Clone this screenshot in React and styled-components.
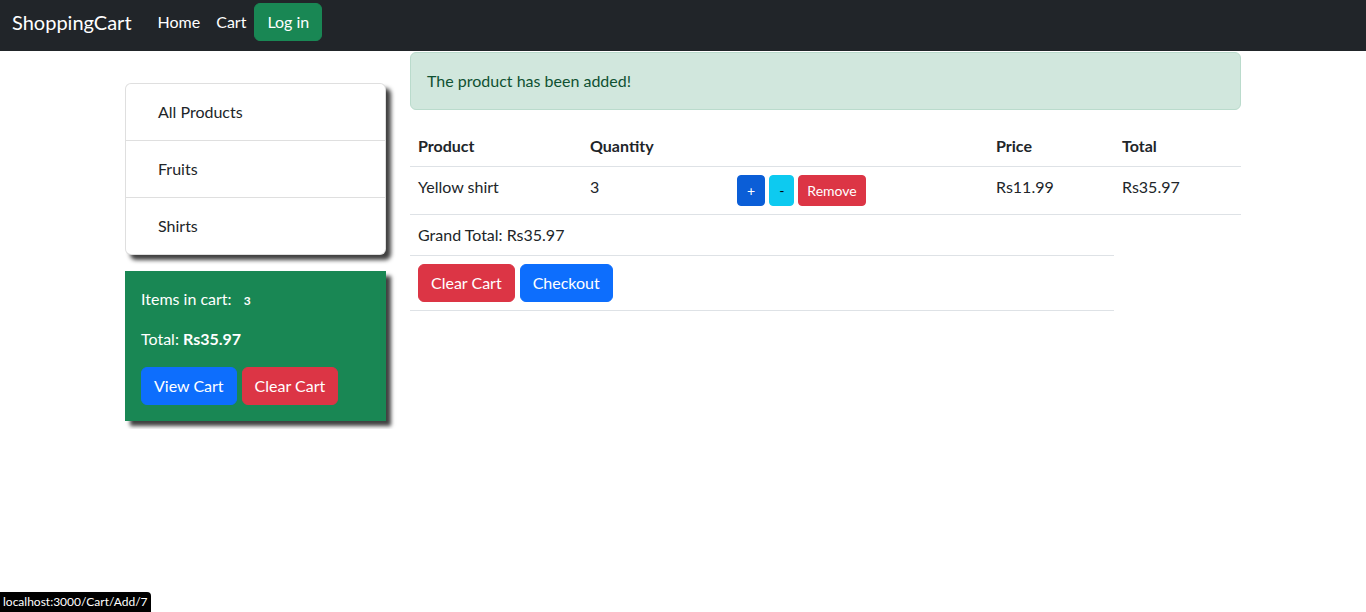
import styled, { createGlobalStyle } from "styled-components";

const GlobalStyle = createGlobalStyle`
    * {
        box-sizing: border-box;
    }
    body {
        margin: 0;
        font-family: Lato, "Liberation Sans", sans-serif;
        font-size: 16px;
        line-height: 1.5;
        color: #212529;
        background: #fff;
    }
`;

const cartRows = [
    { name: "Yellow shirt", qty: 3, price: "Rs11.99", total: "Rs35.97" },
];

export default function App() {
    return (
        <>
            <GlobalStyle />
            <Navbar>
                <Brand>ShoppingCart</Brand>
                <NavLink>Home</NavLink>
                <NavLink>Cart</NavLink>
                <Button $variant="success">Log in</Button>
            </Navbar>

            <Container>
                <Sidebar>
                    <ListGroup>
                        <ListItem>All Products</ListItem>
                        <ListItem>Fruits</ListItem>
                        <ListItem>Shirts</ListItem>
                    </ListGroup>

                    <CartCard>
                        <CardLine>
                            Items in cart: <Badge>3</Badge>
                        </CardLine>
                        <CardLine>
                            Total: <b>Rs35.97</b>
                        </CardLine>
                        <ButtonRow>
                            <Button $variant="primary">View Cart</Button>
                            <Button $variant="danger">Clear Cart</Button>
                        </ButtonRow>
                    </CartCard>
                </Sidebar>

                <Main>
                    <Alert>The product has been added!</Alert>

                    <Table>
                        <colgroup>
                            <col style={{ width: 172 }} />
                            <col style={{ width: 147 }} />
                            <col style={{ width: 259 }} />
                            <col style={{ width: 126 }} />
                            <col style={{ width: 127 }} />
                        </colgroup>
                        <thead>
                            <tr>
                                <Th>Product</Th>
                                <Th>Quantity</Th>
                                <Th></Th>
                                <Th>Price</Th>
                                <Th>Total</Th>
                            </tr>
                        </thead>
                        <tbody>
                            {cartRows.map((row) => (
                                <tr key={row.name}>
                                    <Td>{row.name}</Td>
                                    <Td>{row.qty}</Td>
                                    <Td>
                                        <SmallButtons>
                                            <SmallButton $variant="plus">+</SmallButton>
                                            <SmallButton $variant="info">-</SmallButton>
                                            <SmallButton $variant="danger">Remove</SmallButton>
                                        </SmallButtons>
                                    </Td>
                                    <Td>{row.price}</Td>
                                    <Td>{row.total}</Td>
                                </tr>
                            ))}
                            <tr>
                                <Td>Grand Total: Rs35.97</Td>
                                <Td></Td>
                                <Td></Td>
                                <Td></Td>
                            </tr>
                            <tr>
                                <Td colSpan={4}>
                                    <ButtonRow>
                                        <Button $variant="danger">Clear Cart</Button>
                                        <Button $variant="primary">Checkout</Button>
                                    </ButtonRow>
                                </Td>
                            </tr>
                        </tbody>
                    </Table>
                </Main>
            </Container>

            <StatusBar>localhost:3000/Cart/Add/7</StatusBar>
        </>
    );
}

const colors = {
    primary: "#0d6efd",
    plus: "#0b5ed7",
    success: "#198754",
    danger: "#dc3545",
    info: "#0dcaf0",
};

const Navbar = styled.nav`
    display: flex;
    align-items: center;
    height: 51px;
    padding: 3px 12px 10px;
    background: #212529;
`;

const Brand = styled.span`
    font-size: 20px;
    line-height: 30px;
    color: #fff;
    margin-right: 18px;
`;

const NavLink = styled.span`
    padding: 8px;
    color: #fff;
    line-height: 24px;
`;

const Button = styled.button`
    display: inline-block;
    font-family: inherit;
    font-size: 16px;
    line-height: 24px;
    padding: 6px 12px;
    border: 1px solid ${(p) => colors[p.$variant]};
    border-radius: 6px;
    background: ${(p) => colors[p.$variant]};
    color: #fff;
    cursor: pointer;
`;

const Container = styled.div`
    width: 1140px;
    margin: 0 auto;
    display: grid;
    grid-template-columns: 285px 855px;
    align-items: start;
`;

const Sidebar = styled.aside`
    padding: 32px 12px 8px;
    display: flex;
    flex-direction: column;
    gap: 16px;
`;

const ListGroup = styled.div`
    border: 1px solid rgba(0, 0, 0, 0.125);
    border-radius: 6px;
    background: #fff;
    box-shadow: 5px 5px 4px rgba(0, 0, 0, 0.75);
`;

const ListItem = styled.div`
    padding: 16px 32px;
    & + & {
        border-top: 1px solid rgba(0, 0, 0, 0.125);
    }
`;

const CartCard = styled.div`
    background: #198754;
    color: #fff;
    padding: 16px;
    box-shadow: 5px 5px 4px rgba(0, 0, 0, 0.75);
`;

const CardLine = styled.p`
    margin: 0 0 16px;
`;

const Badge = styled.span`
    display: inline-block;
    font-size: 12px;
    font-weight: 700;
    line-height: 1;
    padding: 4px 8px;
`;

const ButtonRow = styled.div`
    display: flex;
    gap: 5px;
`;

const Main = styled.main`
    padding: 1px 12px 0;
`;

const Alert = styled.div`
    background: #d1e7dd;
    border: 1px solid #badbcc;
    color: #0f5132;
    border-radius: 6px;
    padding: 16px;
    margin-bottom: 16px;
`;

const Table = styled.table`
    width: 831px;
    table-layout: fixed;
    border-collapse: collapse;
`;

const Th = styled.th`
    text-align: left;
    font-weight: 700;
    padding: 8px;
    border-bottom: 1px solid #dee2e6;
`;

const Td = styled.td`
    padding: 8px;
    vertical-align: top;
    border-bottom: 1px solid #dee2e6;
`;

const SmallButtons = styled.div`
    display: flex;
    gap: 4px;
`;

const SmallButton = styled.button`
    font-family: inherit;
    font-size: 14px;
    line-height: 21px;
    padding: 4px ${(p) => (p.$variant === "danger" ? "8px" : "9px")};
    border: 1px solid ${(p) => colors[p.$variant]};
    border-radius: 4px;
    background: ${(p) => colors[p.$variant]};
    color: ${(p) => (p.$variant === "info" ? "#000" : "#fff")};
    cursor: pointer;
`;

const StatusBar = styled.div`
    position: fixed;
    left: 0;
    bottom: 0;
    height: 20px;
    padding: 0 3px;
    background: #000;
    color: #fff;
    font-size: 12px;
    line-height: 20px;
    border-top-right-radius: 4px;
`;
